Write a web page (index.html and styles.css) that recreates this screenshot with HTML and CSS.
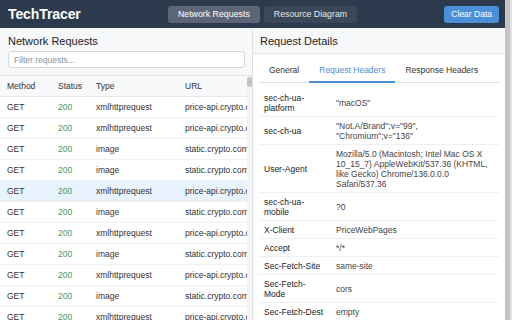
FILE: index.html
```html
<!DOCTYPE html>
<html lang="en">
<head>
    <meta charset="UTF-8">
    <meta name="viewport" content="width=device-width, initial-scale=1.0">
    <title>TechTracer</title>
    <link rel="stylesheet" href="styles.css">
</head>
<body>
    <div class="app">
        <header class="topbar">
            <h1 class="logo">TechTracer</h1>
            <nav class="view-tabs">
                <button class="view-btn active">Network Requests</button>
                <button class="view-btn">Resource Diagram</button>
            </nav>
            <button class="clear-btn">Clear Data</button>
        </header>

        <main class="layout">
            <!-- Left: captured requests -->
            <section class="panel requests-panel">
                <div class="panel-header">
                    <h2>Network Requests</h2>
                    <input class="filter-input" type="text" placeholder="Filter requests...">
                </div>
                <div class="requests-scroll">
                    <div class="table-clip">
                        <table class="requests-table">
                            <colgroup>
                                <col style="width: 51px">
                                <col style="width: 38px">
                                <col style="width: 89px">
                                <col>
                            </colgroup>
                            <thead>
                                <tr>
                                    <th>Method</th>
                                    <th>Status</th>
                                    <th>Type</th>
                                    <th>URL</th>
                                </tr>
                            </thead>
                            <tbody id="requestRows">
                                <!-- Rows are filled by the script below -->
                            </tbody>
                        </table>
                    </div>
                    <div class="scroll-rail"><div class="scroll-thumb"></div></div>
                </div>
            </section>

            <!-- Right: details of the selected request -->
            <section class="panel details-panel">
                <div class="panel-header">
                    <h2>Request Details</h2>
                </div>
                <div class="details-body">
                    <div class="detail-tabs">
                        <button class="detail-tab">General</button>
                        <button class="detail-tab active">Request Headers</button>
                        <button class="detail-tab">Response Headers</button>
                    </div>
                    <table class="headers-table">
                        <tr><td class="key">sec-ch-ua-platform</td><td>"macOS"</td></tr>
                        <tr><td class="key">sec-ch-ua</td><td>"Not.A/Brand";v="99", "Chromium";v="136"</td></tr>
                        <tr><td class="key">User-Agent</td><td>Mozilla/5.0 (Macintosh; Intel Mac OS X 10_15_7) AppleWebKit/537.36 (KHTML, like Gecko) Chrome/136.0.0.0 Safari/537.36</td></tr>
                        <tr><td class="key">sec-ch-ua-mobile</td><td>?0</td></tr>
                        <tr><td class="key">X-Client</td><td>PriceWebPages</td></tr>
                        <tr><td class="key">Accept</td><td>*/*</td></tr>
                        <tr><td class="key">Sec-Fetch-Site</td><td>same-site</td></tr>
                        <tr><td class="key">Sec-Fetch-Mode</td><td>cors</td></tr>
                        <tr><td class="key">Sec-Fetch-Dest</td><td>empty</td></tr>
                    </table>
                </div>
            </section>
        </main>
    </div>
    <div class="page-rail"></div>

    <script>
        const requestRows = document.getElementById("requestRows");

        // Build the list of captured requests
        for (let i = 0; i < 11; i++) {
            const isImage = i === 2 || i === 3 || (i > 4 && i % 2 === 1);
            const row = document.createElement("tr");
            if (i === 4) row.classList.add("selected");
            row.innerHTML =
                `<td>GET</td>` +
                `<td class="status">200</td>` +
                `<td>${isImage ? "image" : "xmlhttprequest"}</td>` +
                `<td class="url">${isImage ? "static.crypto.com" : "price-api.crypto.com"}</td>`;
            requestRows.appendChild(row);
        }
    </script>
</body>
</html>
```

FILE: styles.css
```css
body { font-family: 'Liberation Sans', Arial, sans-serif; margin: 0; padding: 0; color: #333; font-size: 8.5px; background: #fff; display: flex; height: 320px; overflow: hidden; }
.app { flex: 1; min-width: 0; display: flex; flex-direction: column; }
.page-rail { width: 7px; background: linear-gradient(to right, #c4c4c4 5px, #e2e2e2 5px); }

.topbar { height: 28px; flex-shrink: 0; background: #2c3a4d; display: flex; justify-content: space-between; align-items: center; padding: 0 6px 0 8px; }
.logo { margin: 0; color: #fff; font-size: 14px; font-weight: bold; letter-spacing: -0.1px; }
.view-tabs { display: flex; gap: 4px; }
.view-btn { font-family: inherit; font-size: 8.8px; height: 17px; padding: 0 10px; border: none; border-radius: 3px; background: #3b4859; color: #e4e7eb; cursor: pointer; }
.view-btn.active { background: #5c6676; color: #fff; }
.clear-btn { font-family: inherit; font-size: 8.5px; height: 17px; padding: 0 7px; border: none; border-radius: 3px; background: #4a90d9; color: #fff; cursor: pointer; }

.layout { flex: 1; min-height: 0; display: flex; }
.panel { display: flex; flex-direction: column; background: #fff; min-height: 0; }
.requests-panel { width: 253px; box-sizing: border-box; border-right: 1px solid #dcdfe3; }
.details-panel { flex: 1; min-width: 0; }

.panel-header { background: #f7f8fa; padding: 7px 7px 7px 8px; border-bottom: 1px solid #e3e6e9; }
.panel-header h2 { margin: 0; font-size: 11px; line-height: 13px; font-weight: normal; color: #222; }
.details-panel .panel-header { padding: 7px 7px 5px 7px; }
.filter-input { display: block; box-sizing: border-box; width: 100%; height: 17px; margin-top: 3px; padding: 0 5px; border: 1px solid #d3d6da; border-radius: 3px; font-family: inherit; font-size: 8.5px; color: #333; background: #fff; }
.filter-input::placeholder { color: #8a8f95; }

.requests-scroll { flex: 1; min-height: 0; display: flex; }
.table-clip { flex: 1; min-width: 0; overflow: hidden; }
.scroll-rail { width: 5px; background: #f4f4f4; }
.scroll-thumb { height: 10px; margin-top: 1px; border-radius: 3px; background: #c1c1c1; }

.requests-table { width: 320px; table-layout: fixed; border-collapse: collapse; }
.requests-table th { text-align: left; font-weight: normal; background: #f8f9fa; padding: 5px 7px; border-bottom: 1px solid #e6e8eb; color: #333; }
.requests-table td { padding: 5px 7px; border-bottom: 1px solid #eeeff1; white-space: nowrap; overflow: hidden; }
.requests-table td.status { color: #4a9a57; }
.requests-table tr.selected td { background: #e8f3fd; }
.requests-table tbody tr:hover td { background: #f2f6fa; cursor: pointer; }

.details-body { flex: 1; overflow: hidden; padding: 4px 6px 0 6px; }
.detail-tabs { display: flex; border-bottom: 1px solid #dcdfe3; }
.detail-tab { font-family: inherit; font-size: 8.5px; background: none; border: none; border-bottom: 2px solid transparent; margin-bottom: -1px; padding: 7px 10px 6px 10px; color: #333; cursor: pointer; }
.detail-tab.active { color: #4a90d9; border-bottom-color: #4a90d9; }

.headers-table { width: 100%; border-collapse: collapse; margin-top: 6px; }
.headers-table td { padding: 3.5px 5px; border-bottom: 1px solid #eeeff1; vertical-align: middle; line-height: 10px; color: #444; }
.headers-table td.key { width: 62px; color: #222; }
```
